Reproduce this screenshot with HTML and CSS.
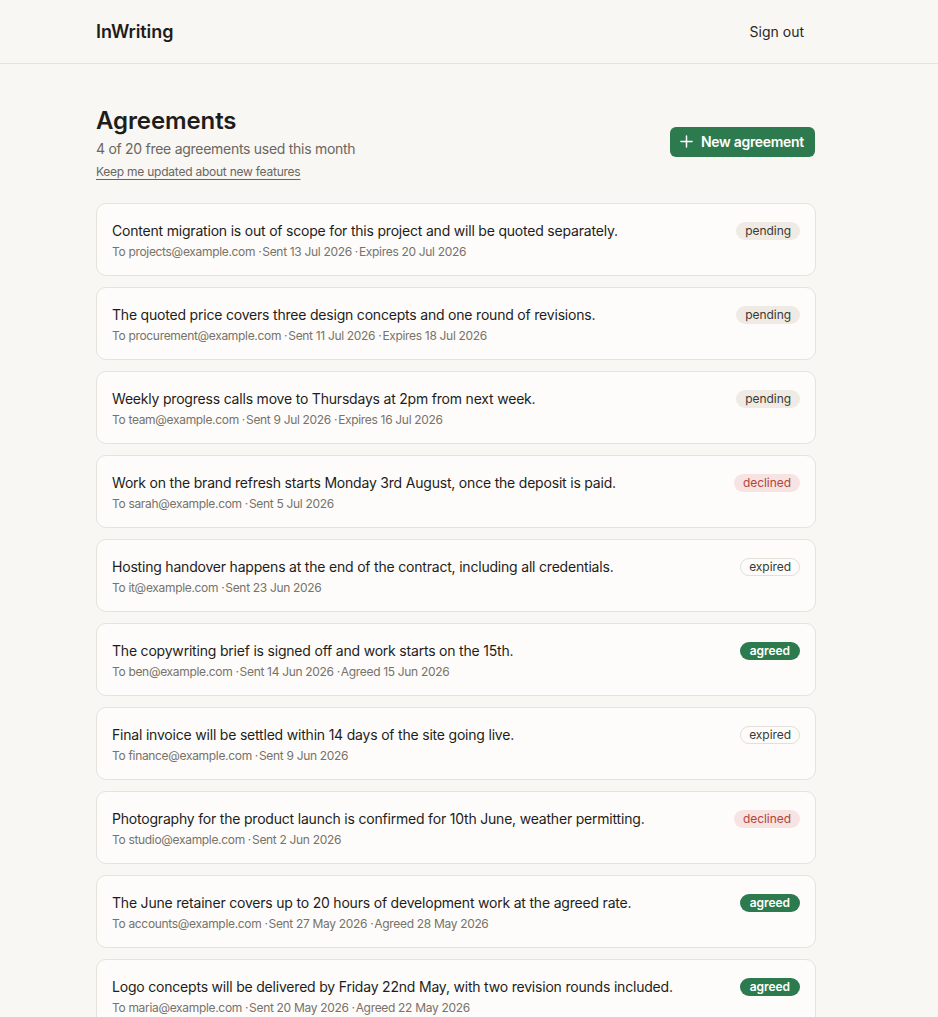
FILE: index.html
```html
<!DOCTYPE html>
<html lang="en">
<head>
<meta charset="utf-8">
<title>InWriting</title>
<link rel="stylesheet" href="styles.css">
</head>
<body>
<header class="topbar">
  <div class="topbar-inner">
    <a class="logo" href="#">InWriting</a>
    <a class="signout" href="#">Sign out</a>
  </div>
</header>
<main class="page">
  <section class="heading">
    <div class="heading-text">
      <h1>Agreements</h1>
      <p class="usage">4 of 20 free agreements used this month</p>
      <a class="updates" href="#">Keep me updated about new features</a>
    </div>
    <a class="btn-new" href="#">
      <svg class="plus" viewBox="0 0 14 14" width="13" height="13" aria-hidden="true"><path d="M7 1v12M1 7h12" stroke="currentColor" stroke-width="1.6" stroke-linecap="round" fill="none"/></svg>
      New agreement
    </a>
  </section>
  <ul class="list">
    <li class="card">
      <div class="card-body">
        <p class="card-title">Content migration is out of scope for this project and will be quoted separately.</p>
        <p class="meta">To projects@example.com<span class="sep">·</span>Sent 13 Jul 2026<span class="sep">·</span>Expires 20 Jul 2026</p>
      </div>
      <span class="badge pending">pending</span>
    </li>
    <li class="card">
      <div class="card-body">
        <p class="card-title">The quoted price covers three design concepts and one round of revisions.</p>
        <p class="meta">To procurement@example.com<span class="sep">·</span>Sent 11 Jul 2026<span class="sep">·</span>Expires 18 Jul 2026</p>
      </div>
      <span class="badge pending">pending</span>
    </li>
    <li class="card">
      <div class="card-body">
        <p class="card-title">Weekly progress calls move to Thursdays at 2pm from next week.</p>
        <p class="meta">To team@example.com<span class="sep">·</span>Sent 9 Jul 2026<span class="sep">·</span>Expires 16 Jul 2026</p>
      </div>
      <span class="badge pending">pending</span>
    </li>
    <li class="card">
      <div class="card-body">
        <p class="card-title">Work on the brand refresh starts Monday 3rd August, once the deposit is paid.</p>
        <p class="meta">To sarah@example.com<span class="sep">·</span>Sent 5 Jul 2026</p>
      </div>
      <span class="badge declined">declined</span>
    </li>
    <li class="card">
      <div class="card-body">
        <p class="card-title">Hosting handover happens at the end of the contract, including all credentials.</p>
        <p class="meta">To it@example.com<span class="sep">·</span>Sent 23 Jun 2026</p>
      </div>
      <span class="badge expired">expired</span>
    </li>
    <li class="card">
      <div class="card-body">
        <p class="card-title">The copywriting brief is signed off and work starts on the 15th.</p>
        <p class="meta">To ben@example.com<span class="sep">·</span>Sent 14 Jun 2026<span class="sep">·</span>Agreed 15 Jun 2026</p>
      </div>
      <span class="badge agreed">agreed</span>
    </li>
    <li class="card">
      <div class="card-body">
        <p class="card-title">Final invoice will be settled within 14 days of the site going live.</p>
        <p class="meta">To finance@example.com<span class="sep">·</span>Sent 9 Jun 2026</p>
      </div>
      <span class="badge expired">expired</span>
    </li>
    <li class="card">
      <div class="card-body">
        <p class="card-title">Photography for the product launch is confirmed for 10th June, weather permitting.</p>
        <p class="meta">To studio@example.com<span class="sep">·</span>Sent 2 Jun 2026</p>
      </div>
      <span class="badge declined">declined</span>
    </li>
    <li class="card">
      <div class="card-body">
        <p class="card-title">The June retainer covers up to 20 hours of development work at the agreed rate.</p>
        <p class="meta">To accounts@example.com<span class="sep">·</span>Sent 27 May 2026<span class="sep">·</span>Agreed 28 May 2026</p>
      </div>
      <span class="badge agreed">agreed</span>
    </li>
    <li class="card">
      <div class="card-body">
        <p class="card-title">Logo concepts will be delivered by Friday 22nd May, with two revision rounds included.</p>
        <p class="meta">To maria@example.com<span class="sep">·</span>Sent 20 May 2026<span class="sep">·</span>Agreed 22 May 2026</p>
      </div>
      <span class="badge agreed">agreed</span>
    </li>
  </ul>
</main>
</body>
</html>
```

FILE: styles.css
```css
* { box-sizing: border-box; }

html, body {
  margin: 0;
  padding: 0;
}

body {
  background: #f8f7f4;
  color: #1f1d1a;
  font-family: Inter, "Noto Sans", "Liberation Sans", sans-serif;
  -webkit-font-smoothing: antialiased;
}

a { color: inherit; text-decoration: none; }

.topbar {
  border-bottom: 1px solid #e5e2dc;
}

.topbar-inner,
.page {
  max-width: 746px;
  margin: 0 auto;
  padding-right: 26px;
}

.topbar-inner {
  height: 63px;
  display: flex;
  align-items: center;
  justify-content: space-between;
}

.logo {
  font-size: 18px;
  font-weight: 600;
  letter-spacing: -0.1px;
  color: #1f1d1a;
}

.signout {
  font-size: 14px;
  color: #2a2723;
  padding: 6px 12px;
}

.page {
  padding-top: 42px;
  padding-bottom: 40px;
}

.heading {
  display: flex;
  justify-content: space-between;
  align-items: center;
  margin-bottom: 23px;
}

h1 {
  margin: 0;
  font-size: 24px;
  font-weight: 600;
  letter-spacing: -0.1px;
  line-height: 30px;
  color: #1f1d1a;
}

.usage {
  margin: 4px 0 2px;
  font-size: 14px;
  line-height: 18px;
  color: #6b665f;
  letter-spacing: -0.28px;
}

.updates {
  display: inline-block;
  font-size: 12px;
  line-height: 16px;
  color: #6b665f;
  text-decoration: underline;
  text-underline-offset: 3px;
  text-decoration-color: #6b665f;
  letter-spacing: -0.24px;
}

.btn-new {
  display: inline-flex;
  align-items: center;
  gap: 8px;
  height: 30px;
  padding: 0 11px 0 10px;
  margin-bottom: 3px;
  margin-right: 1px;
  background: #2d7a4f;
  color: #ffffff;
  border-radius: 6px;
  font-size: 14px;
  font-weight: 600;
  letter-spacing: -0.3px;
}

.plus { display: block; }

.list {
  list-style: none;
  margin: 0;
  padding: 0;
  display: flex;
  flex-direction: column;
  gap: 11px;
}

.card {
  background: #fdfcfa;
  border: 1px solid #e6e3dd;
  border-radius: 10px;
  height: 73px;
  padding: 17px 15px 0 15px;
  display: flex;
  justify-content: space-between;
  align-items: flex-start;
  gap: 16px;
}

.card-body p { margin: 0; }

.card-title {
  font-size: 14px;
  line-height: 20px;
  color: #1f1d1a;
  letter-spacing: -0.2px;
}

.meta {
  margin-top: 3px !important;
  font-size: 12px;
  line-height: 16px;
  color: #77726a;
  letter-spacing: -0.32px;
}

.sep {
  margin: 0 1px 0 3px;
}

.badge {
  flex: none;
  margin-top: 1px;
  font-size: 12px;
  line-height: 18px;
  height: 18px;
  padding: 0 9px;
  border-radius: 10px;
  letter-spacing: -0.05px;
}

.badge.pending {
  background: #efebe4;
  color: #3b3833;
}

.badge.declined {
  background: #f7e3e1;
  color: #b3433d;
}

.badge.expired {
  background: #fdfcfa;
  color: #3b3833;
  border: 1px solid #e3dfd8;
  line-height: 16px;
  padding: 0 8px;
}

.badge.agreed {
  background: #2d7a4f;
  color: #ffffff;
  font-weight: 600;
  padding: 0 10px;
}
```
